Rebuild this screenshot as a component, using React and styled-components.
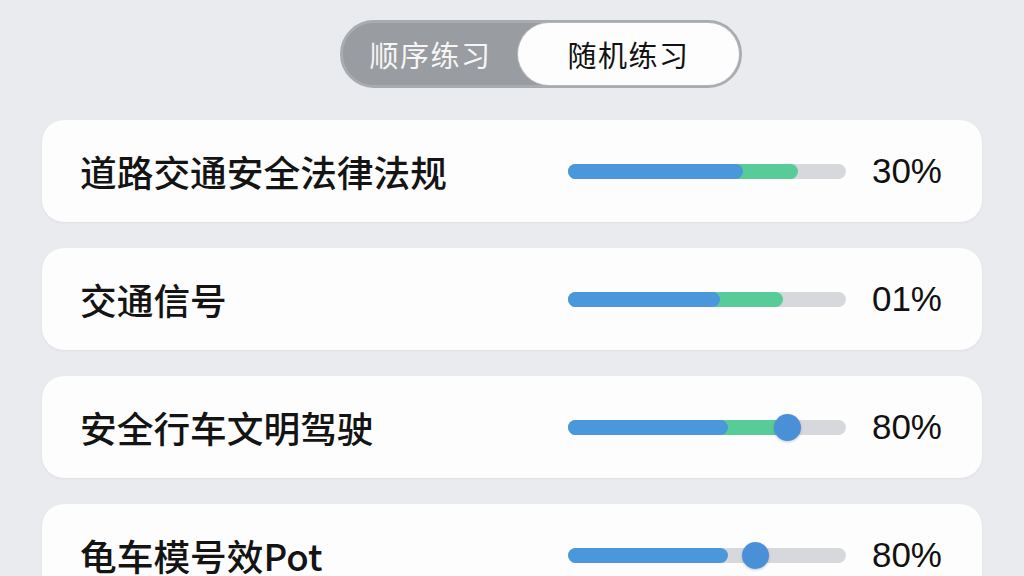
import React from 'react'
import styled, { createGlobalStyle } from 'styled-components'

const GlobalStyle = createGlobalStyle`
  html, body {
    margin: 0;
    padding: 0;
    background: #e9ebee;
    overflow: hidden;
  }
  body {
    font-family: 'Noto Sans CJK SC', 'Noto Sans', sans-serif;
  }
`

const rows = [
  { title: '道路交通安全法律法规', blue: 63, green: 82.7, pct: '30%' },
  { title: '交通信号', blue: 54.7, green: 77.3, pct: '01%' },
  { title: '安全行车文明驾驶', blue: 57.6, green: 78, knob: 78.8, pct: '80%' },
  { title: '龟车模号效Pot', blue: 57.6, knob: 67.3, pct: '80%' },
]

export default function App() {
  return (
    <Page>
      <GlobalStyle />
      <Toggle>
        <Tab>顺序练习</Tab>
        <Tab $active>随机练习</Tab>
      </Toggle>
      <List>
        {rows.map((r) => (
          <Card key={r.title}>
            <Title>{r.title}</Title>
            <Track>
              {r.green && <Fill $color="#57cc98" $w={r.green} />}
              <Fill $color="#4b97dc" $w={r.blue} />
              {r.knob && <Knob $at={r.knob} />}
            </Track>
            <Percent>{r.pct}</Percent>
          </Card>
        ))}
      </List>
    </Page>
  )
}

const Page = styled.div`
  display: flex;
  flex-direction: column;
  padding: 20px 42px 0;
`

const Toggle = styled.div`
  display: flex;
  align-self: flex-start;
  margin-left: 298px;
  height: 62px;
  border: 3px solid #a8abaf;
  border-radius: 34px;
  background: #999ca1;
`

const Tab = styled.div`
  display: flex;
  align-items: center;
  justify-content: center;
  width: ${(p) => (p.$active ? '221px' : '175px')};
  border-radius: 31px;
  font-size: 29px;
  letter-spacing: 1.5px;
  color: ${(p) => (p.$active ? '#121212' : '#f6f6f6')};
  background: ${(p) => (p.$active ? '#fdfdfd' : 'transparent')};
  box-shadow: ${(p) => (p.$active ? '0 0 0 1px #b4b6b9' : 'none')};
`

const List = styled.div`
  display: flex;
  flex-direction: column;
  gap: 26px;
  margin-top: 32px;
`

const Card = styled.div`
  display: flex;
  align-items: center;
  height: 102px;
  flex-shrink: 0;
  padding: 0 40px 0 38px;
  border-radius: 22px;
  background: #fdfdfd;
  box-shadow: 0 1px 3px rgba(0, 0, 0, 0.05);
`

const Title = styled.div`
  flex: 1;
  font-size: 36.7px;
  font-weight: 500;
  color: #141414;
`

const Track = styled.div`
  position: relative;
  width: 278px;
  height: 15px;
  border-radius: 8px;
  background: #d6d8db;
`

const Fill = styled.div`
  position: absolute;
  left: 0;
  top: 0;
  bottom: 0;
  width: ${(p) => p.$w}%;
  border-radius: 8px;
  background: ${(p) => p.$color};
`

const Knob = styled.div`
  position: absolute;
  top: 50%;
  left: ${(p) => p.$at}%;
  width: 27px;
  height: 27px;
  margin: -13.5px 0 0 -13.5px;
  border-radius: 50%;
  background: #4a90d9;
  box-shadow: 0 1px 3px rgba(0, 0, 0, 0.2);
`

const Percent = styled.div`
  width: 96px;
  text-align: right;
  font-family: 'Liberation Sans', 'Noto Sans', sans-serif;
  font-size: 35px;
  color: #111;
`
